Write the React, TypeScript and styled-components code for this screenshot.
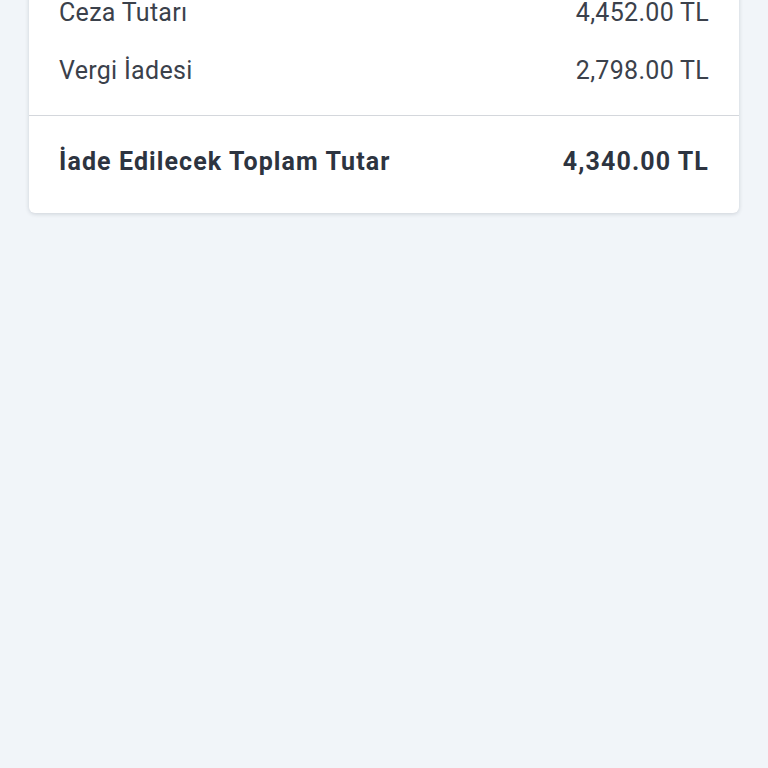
import React from "react";
import styled, { createGlobalStyle } from "styled-components";

const Global = createGlobalStyle`
  html, body { margin: 0; padding: 0; background: #f1f5f9; }
  body { font-family: Roboto, "Noto Sans", Arial, sans-serif; overflow: hidden; }
`;

const Page = styled.div`
  min-height: 768px;
  background: #f1f5f9;
  padding: 0 29px;
`;

const Card = styled.section`
  margin-top: -17px;
  background: #ffffff;
  border-radius: 6px;
  box-shadow: 0 1px 4px rgba(15, 23, 42, 0.16);
  overflow: hidden;
`;

const List = styled.div`
  padding: 0 30px 16px;
`;

const Row = styled.div<{ $bold?: boolean }>`
  display: flex;
  justify-content: space-between;
  align-items: center;
  padding: 16px 0 14px;
  font-size: 25px;
  line-height: 28px;
  letter-spacing: ${(p) => (p.$bold ? "1.1px" : "0.3px")};
  color: ${(p) => (p.$bold ? "#2d3440" : "#3b414b")};
  font-weight: ${(p) => (p.$bold ? 700 : 400)};
`;

const Total = styled.div`
  border-top: 1px solid #d4d7dc;
  padding: 32px 30px 37px;
`;

const TotalRow = styled(Row)`
  padding: 0;
`;

export default function App() {
  return (
    <>
      <Global />
      <Page>
        <Card>
          <List>
            <Row>
              <span>Ceza Tutarı</span>
              <span>4,452.00 TL</span>
            </Row>
            <Row>
              <span>Vergi İadesi</span>
              <span>2,798.00 TL</span>
            </Row>
          </List>
          <Total>
            <TotalRow $bold>
              <span>İade Edilecek Toplam Tutar</span>
              <span>4,340.00 TL</span>
            </TotalRow>
          </Total>
        </Card>
      </Page>
    </>
  );
}
